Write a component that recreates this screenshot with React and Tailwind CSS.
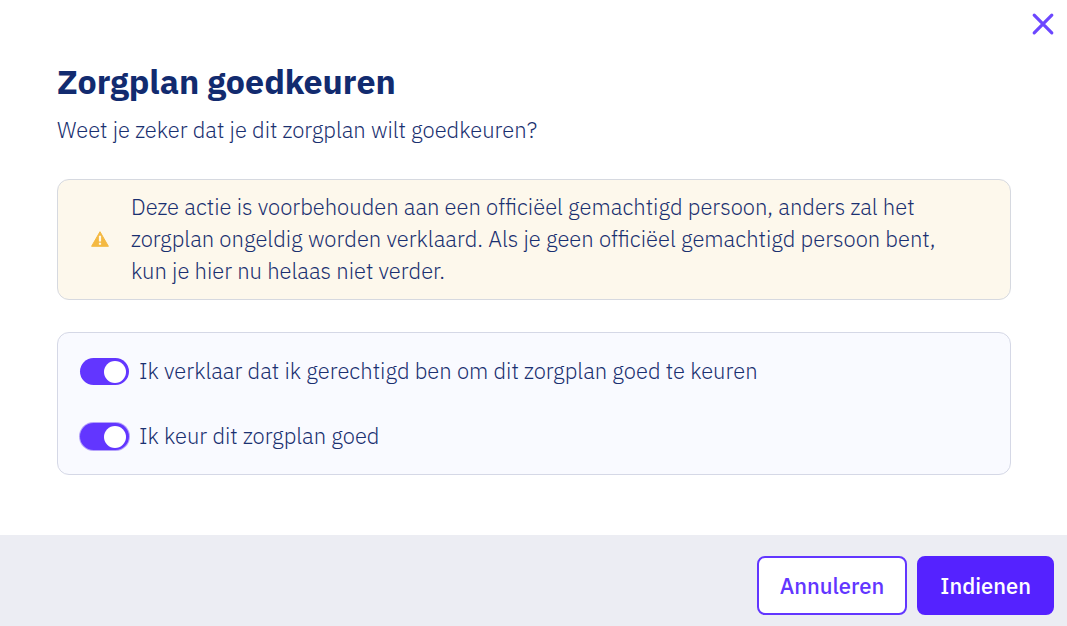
import { useState } from 'react';

function WarningIcon() {
  return (
    <svg viewBox="0 0 18 16" className="h-4 w-[18px] shrink-0" aria-hidden="true">
      <path d="M9 0.7 17.4 15.3H0.6Z" fill="#f4b942" stroke="#f4b942" strokeWidth="1" strokeLinejoin="round" />
      <path d="M7.9 4.8h2.2v5.6H7.9zM7.9 11.7h2.2v2.1H7.9z" fill="#fdf8ec" />
    </svg>
  );
}

function CloseIcon() {
  return (
    <svg viewBox="0 0 20 20" className="size-5 overflow-visible" aria-hidden="true">
      <path d="M1.2 1.2 18.8 18.8M18.8 1.2 1.2 18.8" fill="none" stroke="#6c47ff" strokeWidth="3.2" strokeLinecap="round" />
    </svg>
  );
}

function Toggle({ id, label, checked, onChange, focused }) {
  return (
    <div className="flex items-center gap-[10px]">
      <input
        id={id}
        type="checkbox"
        role="switch"
        checked={checked}
        onChange={(e) => onChange(e.target.checked)}
        className={
          "h-[27px] w-[49px] shrink-0 cursor-pointer appearance-none rounded-full bg-gray-400 pt-[3px] pl-[3px] transition-colors before:block before:size-[22px] before:rounded-full before:bg-white checked:bg-[#6236ff] checked:pl-[24px] " +
          (focused ? 'ring-1 ring-[#b5a2fb]' : '')
        }
      />
      <label htmlFor={id} className="cursor-pointer">
        {label}
      </label>
    </div>
  );
}

export default function App() {
  const [authorized, setAuthorized] = useState(true);
  const [approved, setApproved] = useState(true);

  return (
    <div
      role="dialog"
      aria-labelledby="dialog-title"
      className="flex min-h-screen flex-col bg-white font-['IBM_Plex_Sans','Noto_Sans',sans-serif] text-[22px] leading-8 font-[350] text-[#1a3070]"
    >
      <div className="flex justify-end px-[14px] pt-[14px]">
        <button type="button" aria-label="Sluiten" className="cursor-pointer">
          <CloseIcon />
        </button>
      </div>

      <main className="flex-1 pt-6 pr-14 pb-[60px] pl-[57px]">
        <h1 id="dialog-title" className="text-[34px] leading-[46px] font-bold text-[#122b6f]">
          Zorgplan goedkeuren
        </h1>
        <p className="mt-[10px]">Weet je zeker dat je dit zorgplan wilt goedkeuren?</p>

        <div className="mt-[33px] flex items-center gap-[22px] rounded-xl border border-[#d6d9e0] bg-[#fdf8ec] pt-[11px] pb-3 pr-14 pl-[33px]">
          <WarningIcon />
          <p>
            Deze actie is voorbehouden aan een officiëel gemachtigd persoon, anders zal het zorgplan ongeldig worden
            verklaard. Als je geen officiëel gemachtigd persoon bent, kun je hier nu helaas niet verder.
          </p>
        </div>

        <div className="mt-8 flex flex-col gap-[33px] rounded-xl border border-[#d5d8e6] bg-[#f9faff] p-[22px]">
          <Toggle
            id="authorized"
            label="Ik verklaar dat ik gerechtigd ben om dit zorgplan goed te keuren"
            checked={authorized}
            onChange={setAuthorized}
          />
          <Toggle
            id="approved"
            label="Ik keur dit zorgplan goed"
            checked={approved}
            onChange={setApproved}
            focused
          />
        </div>
      </main>

      <footer className="flex justify-end gap-[10px] bg-[#ecedf3] px-[13px] pt-[21px] pb-[11px] leading-[33px] font-medium">
        <button
          type="button"
          className="cursor-pointer rounded-lg border-2 border-[#6236ff] bg-white px-[21px] py-[11px] text-[#6236ff]"
        >
          Annuleren
        </button>
        <button
          type="button"
          className="cursor-pointer rounded-lg border-2 border-[#5522ff] bg-[#5522ff] px-[21px] py-[11px] text-white"
        >
          Indienen
        </button>
      </footer>
    </div>
  );
}
